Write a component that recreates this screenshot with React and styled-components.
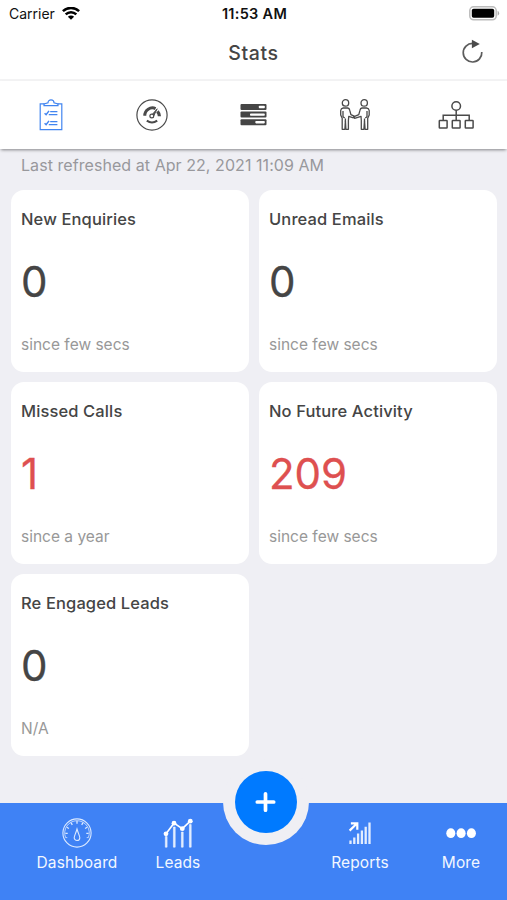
import React from 'react';
import styled, { createGlobalStyle } from 'styled-components';

const stats = [
    { title: 'New Enquiries', value: '0', note: 'since few secs' },
    { title: 'Unread Emails', value: '0', note: 'since few secs' },
    { title: 'Missed Calls', value: '1', note: 'since a year', alert: true },
    { title: 'No Future Activity', value: '209', note: 'since few secs', alert: true },
    { title: 'Re Engaged Leads', value: '0', note: 'N/A' }
];

export default () => {
    return (
        <Screen>
            <GlobalStyle />
            <StatusBar>
                <Carrier>{'Carrier'}<WifiIcon /></Carrier>
                <Clock>{'11:53 AM'}</Clock>
                <BatteryIcon />
            </StatusBar>
            <Header>
                <HeaderTitle>{'Stats'}</HeaderTitle>
                <RefreshButton aria-label='Refresh'><RefreshIcon /></RefreshButton>
            </Header>
            <Tabs>
                <Tab $active><ClipboardIcon /></Tab>
                <Tab><GaugeIcon /></Tab>
                <Tab><BarsIcon /></Tab>
                <Tab><PeopleIcon /></Tab>
                <Tab><TreeIcon /></Tab>
            </Tabs>
            <Content>
                <Refreshed>{'Last refreshed at Apr 22, 2021 11:09 AM'}</Refreshed>
                <CardGrid>
                    {stats.map(stat => (
                        <Card key={stat.title}>
                            <CardTitle>{stat.title}</CardTitle>
                            <CardValue $alert={stat.alert}>{stat.value}</CardValue>
                            <CardNote>{stat.note}</CardNote>
                        </Card>
                    ))}
                </CardGrid>
            </Content>
            <BottomBar>
                <NavItem><DialIcon /><NavLabel>{'Dashboard'}</NavLabel></NavItem>
                <NavItem><LeadsIcon /><NavLabel>{'Leads'}</NavLabel></NavItem>
                <span />
                <NavItem><ReportsIcon /><NavLabel>{'Reports'}</NavLabel></NavItem>
                <NavItem><MoreIcon /><NavLabel>{'More'}</NavLabel></NavItem>
                <AddNotch>
                    <AddButton aria-label='Add'><PlusIcon /></AddButton>
                </AddNotch>
            </BottomBar>
        </Screen>
    );
};

const WifiIcon = () => (
    <svg width='18' height='14' viewBox='0 0 18 14' fill='none' stroke='#000' strokeWidth='2.5'>
        <path d='M0.9 4.2a11.6 11.6 0 0 1 16.2 0' />
        <path d='M3.7 7.4a7.6 7.6 0 0 1 10.6 0' />
        <path d='M9 12.8L5.9 9.7a4.4 4.4 0 0 1 6.2 0z' fill='#000' stroke='none' />
    </svg>
);

const BatteryIcon = () => (
    <svg width='31' height='15' viewBox='0 0 31 15'>
        <rect x='0.8' y='0.8' width='26.4' height='13' rx='3.8' fill='#fff' stroke='#bcbcbc' strokeWidth='1.5' />
        <rect x='2.8' y='2.8' width='22.4' height='9' rx='1.8' fill='#000' />
        <path d='M28.6 4.8a2.8 2.8 0 0 1 0 5z' fill='#aaa' />
    </svg>
);

const RefreshIcon = () => (
    <svg width='24' height='26' viewBox='0 0 24 26'>
        <path d='M11.8 3.4A9.3 9.3 0 1 0 20.8 12' fill='none' stroke='#5c5c5c' strokeWidth='1.7' />
        <path d='M10.9 -0.3L18.8 4L10.9 8.3z' fill='#4a4a4a' />
    </svg>
);

const ClipboardIcon = () => (
    <svg width='24' height='32' viewBox='0 0 24 32' fill='none' stroke='currentColor' strokeWidth='1.2'>
        <path d='M5.5 4.8H1.2v25.9h21.6V4.8h-4.3' />
        <path d='M5 6.6V4.9l4-1.1a3 3 0 0 1 6 0l4 1.1v1.700z' />
        <path d='M5.6 14.3l1.5 1.4 2.9-3.8M5.6 24.3l1.5 1.4 2.9-3.8' strokeWidth='1.5' />
        <path d='M11.2 12.7h7.2M9.8 15.6h8.6M11.2 22.7h7.2M9.8 25.6h8.6' />
    </svg>
);

const GaugeIcon = () => (
    <svg width='32' height='32' viewBox='0 0 32 32' fill='none' stroke='currentColor'>
        <circle cx='16' cy='16' r='15.1' strokeWidth='1.2' />
        <path d='M8.8 16.8a7.6 7.6 0 0 1 10.8-7.2' strokeWidth='3' />
        <path d='M21.4 12.3a7.6 7.6 0 0 1 2 5' strokeWidth='3.2' />
        <path d='M10.8 21.7c3.2 2.2 7.2 2.2 10.4 0' strokeWidth='2.1' />
        <path d='M15.4 16.4l5.8-6.6-3.8 7.9z' strokeWidth='0.9' fill='currentColor' />
        <circle cx='15.8' cy='17' r='1.9' fill='#fff' strokeWidth='1.2' />
    </svg>
);

const BarsIcon = () => (
    <svg width='27' height='22' viewBox='0 0 27 22'>
        <rect x='0.5' y='0' width='26' height='6' rx='1' fill='#454545' />
        <rect x='0.5' y='7.6' width='26' height='6' rx='1' fill='#454545' />
        <rect x='0.5' y='15.2' width='26' height='6' rx='1' fill='#454545' />
        <rect x='18.8' y='1.8' width='6' height='2.4' rx='0.8' fill='#fff' />
        <rect x='10' y='9.4' width='14.8' height='2.4' rx='0.8' fill='#fff' />
        <rect x='15.3' y='17' width='9.5' height='2.4' rx='0.8' fill='#fff' />
    </svg>
);

const PeopleIcon = () => (
    <svg width='32' height='32' viewBox='0 0 32 32' fill='none' stroke='currentColor' strokeWidth='1.3' strokeLinejoin='round'>
        <circle cx='6.5' cy='3.9' r='3.2' />
        <circle cx='25.2' cy='3.9' r='3.2' />
        <path d='M4.2 9h4.5q1.700.3 2 2.200l1.200 4.500 3.200 1.500-.7 1.600-4.600-1.500-.4 4v9H6.900l-.5-8.500-.5 8.500H3.200v-11l-1.500-3.400V11.500q.3-2.200 2.500-2.500z' />
        <path d='M4 12v5.700l1.700 1.400M6.400 19.500v3' />
        <path d='M27.5 9H23q-1.700.3-2 2.200l-1.200 4.500-4.700 2 .5 1.600 6.400-2 .3 4v9h2.600l.6-8.500.6 8.500h2.600v-11l1.500-3.400V11.500q-.3-2.200-2.700-2.500z' />
        <path d='M28 12v5.700l-1.700 1.400M25.500 19.500v3' />
    </svg>
);

const TreeIcon = () => (
    <svg width='36' height='30' viewBox='0 0 36 30' fill='none' stroke='currentColor' strokeWidth='1.5'>
        <circle cx='18.2' cy='6' r='4.3' />
        <path d='M18.2 10.3V20.5M5.2 20.5v-5.2h26v5.2' />
        <rect x='1.3' y='20.5' width='7.8' height='7.6' rx='0.6' />
        <rect x='14.3' y='20.5' width='7.8' height='7.6' rx='0.6' />
        <rect x='27.3' y='20.5' width='7.8' height='7.6' rx='0.6' />
    </svg>
);

const DialIcon = () => (
    <svg width='30' height='30' viewBox='0 0 30 30' fill='none' stroke='#dceaff'>
        <circle cx='15' cy='15' r='14.1' strokeWidth='1.1' />
        <path d='M5.3 19.6H3.6A12.3 12.3 0 1 1 26.4 19.6h-1.7' strokeWidth='0.8' />
        <path d='M3.4 15.3h2.3M4.8 9.3l2.1 1.2M9 4.7l1.3 2.2M15 3v2.7M21 4.7l-1.3 2.2M25.2 9.3l-2.1 1.2M26.6 15.3h-2.3' strokeWidth='1.3' />
        <path d='M15 11c1.4 5 2.8 7 2.8 8.7a2.8 2.8 0 0 1-5.6 0c0-1.7 1.4-3.7 2.8-8.7z' strokeWidth='1.1' />
    </svg>
);

const LeadsIcon = () => (
    <svg width='30' height='30' viewBox='0 0 30 30' fill='none' stroke='#fff'>
        <path d='M3 15.8l8-10.6 8.3 5.5 8-7.5' strokeWidth='1.6' />
        <path d='M2.3 29.2V18.5h1.8v10.7zM10.4 29.2V9h1.8v20.2zM18.4 29.2V14h1.8v15.2zM26.4 29.2V6.5h1.8v22.7z' fill='#dceaff' strokeWidth='0.5' />
        <g fill='#fff' stroke='none'>
            <circle cx='3' cy='15.8' r='2.4' />
            <circle cx='11' cy='5.2' r='2.4' />
            <circle cx='19.3' cy='10.7' r='2.4' />
            <circle cx='27.3' cy='3.2' r='2.4' />
        </g>
    </svg>
);

const ReportsIcon = () => (
    <svg width='24' height='30' viewBox='0 0 24 30' fill='none' stroke='#fff'>
        <path d='M2.5 26v-3.5M6.3 26v-6.5M10.1 26v-10.5M13.9 26V12.5M17.7 26V8.7M21.5 26V4.5' strokeWidth='2.3' stroke='#e2edff' />
        <path d='M1.6 12.6L8.4 6M2.9 5.4h6.4v6.4' strokeWidth='2.2' />
    </svg>
);

const MoreIcon = () => (
    <svg width='30' height='30' viewBox='0 0 30 30' fill='#fff'>
        <ellipse cx='4.8' cy='15.2' rx='4.5' ry='4.9' />
        <ellipse cx='15.1' cy='15.2' rx='4.5' ry='4.9' />
        <ellipse cx='25.4' cy='15.2' rx='4.5' ry='4.9' />
    </svg>
);

const PlusIcon = () => (
    <svg width='22' height='22' viewBox='0 0 22 22' stroke='#fff' strokeWidth='3.7' strokeLinecap='round'>
        <path d='M10.5 2.8v16.4M2.3 11h16.4' />
    </svg>
);

const GlobalStyle = createGlobalStyle`
    * {
        box-sizing: border-box;
    }

    body {
        margin: 0;
        overflow: hidden;
        font-family: Inter, 'Liberation Sans', sans-serif;
    }

    svg {
        display: block;
        flex: none;
    }
`;

const Screen = styled.div`
    display: flex;
    flex-direction: column;
    width: 507px;
    height: 900px;
    overflow: hidden;
    background: #efeff4;
    color: #454545;
`;

const StatusBar = styled.div`
    display: grid;
    grid-template-columns: 1fr auto 1fr;
    align-items: center;
    height: 27px;
    padding: 0 7px 0 9px;
    background: #fff;
    color: #111;

    > :last-child {
        justify-self: end;
    }
`;

const Carrier = styled.span`
    display: flex;
    align-items: center;
    gap: 7px;
    font-size: 14px;
`;

const Clock = styled.span`
    font-size: 14.5px;
    font-weight: 600;
    letter-spacing: 0.3px;
`;

const Header = styled.header`
    display: grid;
    grid-template-columns: 1fr auto 1fr;
    align-items: center;
    height: 54px;
    padding: 0 22px;
    background: #fff;
    border-bottom: 2px solid #f3f3f4;
`;

const HeaderTitle = styled.h1`
    grid-column: 2;
    margin: 0;
    font-size: 19.5px;
    font-weight: 500;
    letter-spacing: 0.6px;
`;

const RefreshButton = styled.button`
    justify-self: end;
    padding: 0;
    border: 0;
    background: none;

    svg {
        overflow: visible;
    }
`;

const Tabs = styled.nav`
    display: flex;
    z-index: 1;
    height: 68px;
    background: #fff;
    box-shadow: 0 2px 3px -1px rgba(0, 0, 0, 0.45);
`;

const Tab = styled.div`
    display: flex;
    flex: 1;
    align-items: center;
    justify-content: center;
    color: ${({ $active }) => ($active ? '#4285f0' : '#4a4a4a')};
`;

const Content = styled.main`
    flex: 1;
    padding: 6px 10px 0 11px;
`;

const Refreshed = styled.p`
    margin: 0 0 14px;
    padding-left: 10px;
    font-size: 16px;
    line-height: 21px;
    letter-spacing: 0.06px;
    color: #98989c;
`;

const CardGrid = styled.div`
    display: grid;
    grid-template-columns: 1fr 1fr;
    gap: 10px;
`;

const Card = styled.section`
    height: 182px;
    padding: 19px 10px;
    border-radius: 13px;
    background: #fff;
`;

const CardTitle = styled.h2`
    margin: 0;
    font-size: 16.5px;
    font-weight: 500;
    line-height: 20px;
    letter-spacing: 0.12px;
`;

const CardValue = styled.div`
    margin: 28px 0;
    font-size: 42px;
    font-weight: 400;
    line-height: 50px;
    color: ${({ $alert }) => ($alert ? '#de5050' : '#454545')};
    -webkit-text-stroke: 0.3px currentColor;
`;

const CardNote = styled.div`
    font-size: 15.5px;
    line-height: 20px;
    color: #989898;
`;

const BottomBar = styled.nav`
    position: relative;
    display: grid;
    grid-template-columns: 101px 101px 81px 101px 101px;
    height: 97px;
    padding: 15px 0 0 26.5px;
    background: #3f82f5;
`;

const NavItem = styled.div`
    display: flex;
    flex-direction: column;
    align-items: center;
`;

const NavLabel = styled.span`
    margin-top: 5px;
    font-size: 15.5px;
    line-height: 20px;
    letter-spacing: 0.1px;
    color: #f2f7ff;
`;

/* Sits over the top edge of the bar and cuts the round notch out of it */
const AddNotch = styled.div`
    position: absolute;
    top: -44px;
    left: 223px;
    display: flex;
    align-items: center;
    justify-content: center;
    width: 86px;
    height: 86px;
    border-radius: 50%;
    background: #efeff4;
`;

const AddButton = styled.button`
    display: flex;
    align-items: center;
    justify-content: center;
    width: 62px;
    height: 62px;
    padding: 0;
    border: 0;
    border-radius: 50%;
    background: #007aff;
`;
